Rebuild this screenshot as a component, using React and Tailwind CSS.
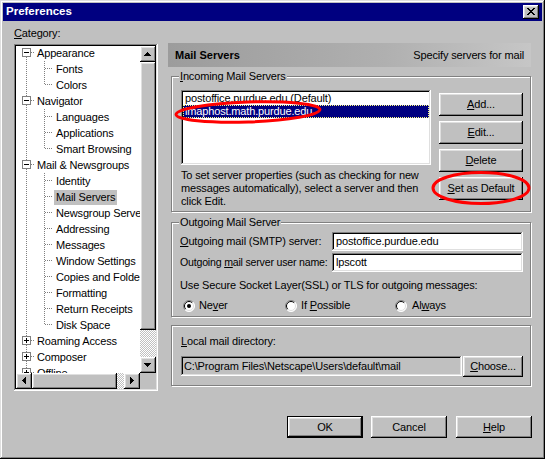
import React from 'react';

// Win98 bevels
const raised = 'shadow-[inset_-1px_-1px_0_#000,inset_1px_1px_0_#fff,inset_-2px_-2px_0_#808080,inset_2px_2px_0_#dfdfdf]';
const sunken = 'shadow-[inset_-1px_-1px_0_#fff,inset_1px_1px_0_#808080,inset_-2px_-2px_0_#dfdfdf,inset_2px_2px_0_#000]';
const etched = 'border border-[#808080] shadow-[1px_1px_0_#fff,inset_1px_1px_0_#fff]';

const tree = [
  { t: 'Appearance', lvl: 0, open: true, first: true },
  { t: 'Fonts', lvl: 1 },
  { t: 'Colors', lvl: 1, last: true },
  { t: 'Navigator', lvl: 0, open: true },
  { t: 'Languages', lvl: 1 },
  { t: 'Applications', lvl: 1 },
  { t: 'Smart Browsing', lvl: 1, last: true },
  { t: 'Mail & Newsgroups', lvl: 0, open: true },
  { t: 'Identity', lvl: 1 },
  { t: 'Mail Servers', lvl: 1, sel: true },
  { t: 'Newsgroup Servers', lvl: 1 },
  { t: 'Addressing', lvl: 1 },
  { t: 'Messages', lvl: 1 },
  { t: 'Window Settings', lvl: 1 },
  { t: 'Copies and Folders', lvl: 1 },
  { t: 'Formatting', lvl: 1 },
  { t: 'Return Receipts', lvl: 1 },
  { t: 'Disk Space', lvl: 1, last: true },
  { t: 'Roaming Access', lvl: 0 },
  { t: 'Composer', lvl: 0 },
  { t: 'Offline', lvl: 0 },
  { t: 'Advanced', lvl: 0 },
];

function TreeRow({ item }) {
  const dots = { stroke: '#808080', strokeDasharray: '1 1' };
  if (item.lvl === 0) {
    return (
      <div className="flex h-4 items-center whitespace-nowrap">
        <svg width="19" height="16" className="shrink-0">
          <line x1="10.5" y1={item.first ? 8 : 0} x2="10.5" y2="16" {...dots} />
          <rect x="6.5" y="3.5" width="8" height="8" fill="#fff" stroke="#808080" />
          <line x1="8" y1="7.5" x2="13" y2="7.5" stroke="#000" />
          {!item.open && <line x1="10.5" y1="5" x2="10.5" y2="10" stroke="#000" />}
          <line x1="15" y1="7.5" x2="19" y2="7.5" {...dots} />
        </svg>
        <span className="px-[2px] leading-[14px]">{item.t}</span>
      </div>
    );
  }
  return (
    <div className="flex h-4 items-center whitespace-nowrap">
      <svg width="38" height="16" className="shrink-0">
        <line x1="10.5" y1="0" x2="10.5" y2="16" {...dots} />
        <line x1="28.5" y1="0" x2="28.5" y2={item.last ? 8 : 16} {...dots} />
        <line x1="29" y1="7.5" x2="36" y2="7.5" {...dots} />
      </svg>
      <span className={`px-[2px] leading-[15px] ${item.sel ? 'bg-[#c0c0c0]' : ''}`}>{item.t}</span>
    </div>
  );
}

const arrows = {
  up: 'M7 6h1v1h1v1h1v1h1v1H4V9h1V8h1V7h1z',
  down: 'M4 6h7v1h-1v1h-1v1h-1v1H7V9H6V8H5V7H4z',
  left: 'M6 7h1V6h1V5h1V4h1v7H9v-1H8V9H7V8H6z',
  right: 'M6 4h1v1h1v1h1v1h1v1H9v1H8v1H7v1H6z',
};

function ScrollBtn({ dir }) {
  return (
    <div className={`w-4 h-4 shrink-0 bg-[#c0c0c0] ${raised}`}>
      <svg width="16" height="16" shapeRendering="crispEdges">
        <path d={arrows[dir]} fill="#000" />
      </svg>
    </div>
  );
}

const checker = 'bg-[image:repeating-conic-gradient(#c0c0c0_0%_25%,#ffffff_0%_50%)] bg-size-[2px_2px] bg-[length:2px_2px]';

function Btn({ children, className = '' }) {
  return (
    <div className={`flex items-center justify-center bg-[#c0c0c0] text-black ${raised} ${className}`}>
      {children}
    </div>
  );
}

function Radio({ checked }) {
  return (
    <svg width="12" height="12" viewBox="0 0 12 12" className="shrink-0">
      <circle cx="6" cy="6" r="5.5" fill="#fff" />
      <path d="M2.1 9.9A5.5 5.5 0 0 1 9.9 2.1" stroke="#808080" fill="none" />
      <path d="M9.9 2.1A5.5 5.5 0 0 1 2.1 9.9" stroke="#fff" fill="none" />
      <path d="M2.8 9.2A4.5 4.5 0 0 1 9.2 2.8" stroke="#000" fill="none" />
      <path d="M9.2 2.8A4.5 4.5 0 0 1 2.8 9.2" stroke="#dfdfdf" fill="none" />
      {checked && <circle cx="6" cy="6" r="2" fill="#000" />}
    </svg>
  );
}

const closeX = [
  [0, 1, 6, 7],
  [1, 2, 5, 6],
  [2, 3, 4, 5],
  [3, 4],
  [2, 3, 4, 5],
  [1, 2, 5, 6],
  [0, 1, 6, 7],
];

export default function App() {
  return (
    <div className="relative w-[545px] h-[459px] bg-[#c0c0c0] p-[3px] flex flex-col text-[11px] tracking-[-0.15px] text-black font-['Liberation_Sans',Arial,sans-serif] shadow-[inset_-1px_-1px_0_#000,inset_1px_1px_0_#dfdfdf,inset_-2px_-2px_0_#808080,inset_2px_2px_0_#fff] overflow-hidden">
      {/* Title bar */}
      <div className="h-[18px] bg-[#000080] flex items-center justify-between pl-[3px] pr-[3px] shrink-0">
        <span className="text-white font-bold text-[11.5px] tracking-normal leading-none">Preferences</span>
        <div className={`w-4 h-[14px] bg-[#c0c0c0] ${raised}`}>
          <svg width="16" height="14" shapeRendering="crispEdges">
            {closeX.map((row, y) =>
              row.map((x) => <rect key={`${x}-${y}`} x={4 + x} y={3 + y} width="1" height="1" fill="#000" />)
            )}
          </svg>
        </div>
      </div>

      <div className="flex flex-1">
        {/* Left: category tree */}
        <div className="ml-[11px] w-[144px] pt-[6px] flex flex-col">
          <div className="h-[13px] leading-[13px]">
            <span className="underline">C</span>ategory:
          </div>
          <div className={`mt-[4px] h-[347px] bg-white p-[2px] flex flex-col ${sunken}`}>
            <div className="flex flex-1 min-h-0">
              <div className="flex-1 overflow-hidden bg-white">
                <div className="-mt-[1px]">
                  {tree.map((it) => (
                    <TreeRow key={it.t} item={it} />
                  ))}
                </div>
              </div>
              <div className="w-4 flex flex-col">
                <ScrollBtn dir="up" />
                <div className={`h-[268px] bg-[#c0c0c0] ${raised}`} />
                <div className={`flex-1 ${checker}`} />
                <ScrollBtn dir="down" />
              </div>
            </div>
            <div className="flex h-4">
              <ScrollBtn dir="left" />
              <div className={`w-[85px] bg-[#c0c0c0] ${raised}`} />
              <div className={`flex-1 ${checker}`} />
              <ScrollBtn dir="right" />
              <div className="w-4 bg-[#c0c0c0]" />
            </div>
          </div>
        </div>

        {/* Right: Mail Servers panel */}
        <div className="ml-[10px] w-[364px] pt-[22px] flex flex-col">
          <div className="h-[24px] mr-[1px] flex items-center justify-between px-[7px] bg-[linear-gradient(to_right,#9c9c9c,#b0b0b0_60%,#c6c6c6)]">
            <span className="font-bold tracking-normal">Mail Servers</span>
            <span>Specify servers for mail</span>
          </div>

          {/* Incoming */}
          <div className={`mt-[9px] ml-[3px] mr-[1px] ${etched}`}>
            <div className="-mt-[7px] ml-[7px] w-fit px-[1px] bg-[#c0c0c0] h-[13px] leading-[13px]">
              <span className="underline">I</span>ncoming Mail Servers
            </div>
            <div className="flex pl-[9px] pr-[7px] pt-[7px] pb-[3px]">
              <div className="w-[250px]">
                <div className={`h-[75px] bg-white p-[2px] ${sunken}`}>
                  <div className="h-[13px] leading-[13px] px-[2px] whitespace-nowrap">postoffice.purdue.edu (Default)</div>
                  <div className="h-[13px] leading-[13px] px-[2px] whitespace-nowrap bg-[#000080] text-white outline-1 outline-dotted outline-[#ffff80] -outline-offset-1">
                    imaphost.math.purdue.edu
                  </div>
                </div>
                <p className="mt-[4px] leading-[13px]">
                  To set server properties (such as checking for new messages automatically), select a server and then click Edit.
                </p>
              </div>
              <div className="ml-[8px] w-[84px] pt-[3px] flex flex-col gap-[5px]">
                <Btn className="h-[23px]"><span><span className="underline">A</span>dd...</span></Btn>
                <Btn className="h-[23px]"><span><span className="underline">E</span>dit...</span></Btn>
                <Btn className="h-[23px]"><span><span className="underline">D</span>elete</span></Btn>
                <Btn className="h-[23px]"><span><span className="underline">S</span>et as Default</span></Btn>
              </div>
            </div>
          </div>

          {/* Outgoing */}
          <div className={`mt-[10px] ml-[3px] mr-[1px] ${etched}`}>
            <div className="-mt-[7px] ml-[7px] w-fit px-[1px] bg-[#c0c0c0] h-[13px] leading-[13px]">
              Outgoing Mail Server
            </div>
            <div className="pl-[8px] pr-[7px] pt-[3px] pb-[4px] flex flex-col">
              <div className="flex items-center h-[19px]">
                <span className="w-[152px] shrink-0 whitespace-nowrap"><span className="underline">O</span>utgoing mail (SMTP) server:</span>
                <div className={`flex-1 h-[19px] bg-white pl-[4px] flex items-center ${sunken}`}>postoffice.purdue.edu</div>
              </div>
              <div className="flex items-center h-[19px] mt-[2px]">
                <span className="w-[152px] shrink-0 whitespace-nowrap text-[10.6px] tracking-[-0.2px]">Outgoing <span className="underline">m</span>ail server user name:</span>
                <div className={`flex-1 h-[19px] bg-white pl-[4px] flex items-center ${sunken}`}>lpscott</div>
              </div>
              <div className="mt-[7px] h-[13px] leading-[13px]">Use Secure Socket Layer(SSL) or TLS for outgoing messages:</div>
              <div className="mt-[7px] h-[13px] flex items-center pl-[3px]">
                <div className="w-[102px] flex items-center gap-[4px]">
                  <Radio checked />
                  <span>Ne<span className="underline">v</span>er</span>
                </div>
                <div className="w-[110px] flex items-center gap-[4px]">
                  <Radio />
                  <span>If <span className="underline">P</span>ossible</span>
                </div>
                <div className="flex items-center gap-[5px]">
                  <Radio />
                  <span>Al<span className="underline">w</span>ays</span>
                </div>
              </div>
            </div>
          </div>

          {/* Local mail directory */}
          <div className={`mt-[8px] ml-[3px] mr-[1px] pl-[9px] pr-[7px] pt-[9px] pb-[8px] ${etched}`}>
            <div className="h-[13px] leading-[13px]">
              <span className="underline">L</span>ocal mail directory:
            </div>
            <div className="mt-[8px] flex h-[21px]">
              <div className={`w-[281px] h-[20px] bg-[#c0c0c0] pl-[3px] flex items-center whitespace-nowrap ${sunken}`}>
                C:\Program Files\Netscape\Users\default\mail
              </div>
              <Btn className="ml-[1px] flex-1 h-[21px]"><span><span className="underline">C</span>hoose...</span></Btn>
            </div>
          </div>

          {/* Dialog buttons */}
          <div className="mt-[30px] flex justify-end gap-[8px]">
            <div className="w-[76px] h-[22px] flex items-center justify-center bg-[#c0c0c0] shadow-[inset_0_0_0_1px_#000,inset_-2px_-2px_0_#000,inset_2px_2px_0_#fff,inset_-3px_-3px_0_#808080,inset_3px_3px_0_#dfdfdf]">
              OK
            </div>
            <Btn className="w-[76px] h-[22px]">Cancel</Btn>
            <Btn className="w-[76px] h-[22px] ml-[1px]"><span><span className="underline">H</span>elp</span></Btn>
          </div>
        </div>
      </div>

      {/* Red annotation ellipses drawn over the screenshot */}
      <svg className="absolute inset-0 pointer-events-none" width="545" height="459">
        <ellipse cx="248" cy="112" rx="72" ry="10" fill="none" stroke="#ff0000" strokeWidth="3" transform="rotate(-2 248 112)" />
        <ellipse cx="481" cy="188" rx="48" ry="15.5" fill="none" stroke="#ff0000" strokeWidth="3" />
      </svg>
    </div>
  );
}
